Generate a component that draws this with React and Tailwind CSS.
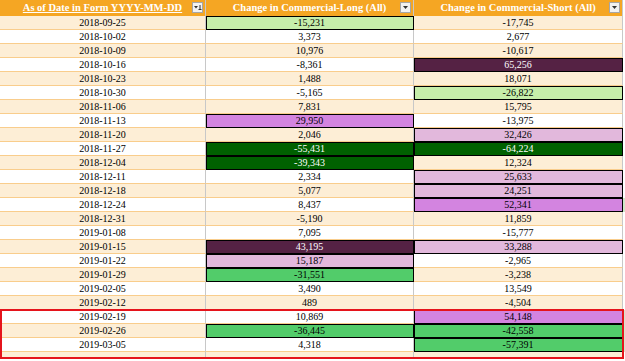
const rows = [
  ['2018-09-25', '-15,231', '-17,745', 'lg', null],
  ['2018-10-02', '3,373', '2,677', null, null],
  ['2018-10-09', '10,976', '-10,617', null, null],
  ['2018-10-16', '-8,361', '65,256', null, 'dp'],
  ['2018-10-23', '1,488', '18,071', null, null],
  ['2018-10-30', '-5,165', '-26,822', null, 'lg'],
  ['2018-11-06', '7,831', '15,795', null, null],
  ['2018-11-13', '29,950', '-13,975', 'mp', null],
  ['2018-11-20', '2,046', '32,426', null, 'lp'],
  ['2018-11-27', '-55,431', '-64,224', 'dg', 'dg'],
  ['2018-12-04', '-39,343', '12,324', 'dg', null],
  ['2018-12-11', '2,334', '25,633', null, 'lp'],
  ['2018-12-18', '5,077', '24,251', null, 'lp'],
  ['2018-12-24', '8,437', '52,341', null, 'mp'],
  ['2018-12-31', '-5,190', '11,859', null, null],
  ['2019-01-08', '7,095', '-15,777', null, null],
  ['2019-01-15', '43,195', '33,288', 'dp', 'lp'],
  ['2019-01-22', '15,187', '-2,965', 'lp', null],
  ['2019-01-29', '-31,551', '-3,238', 'mg', null],
  ['2019-02-05', '3,490', '13,549', null, null],
  ['2019-02-12', '489', '-4,504', null, null],
  ['2019-02-19', '10,869', '54,148', null, 'mp'],
  ['2019-02-26', '-36,445', '-42,558', 'mg', 'mg'],
  ['2019-03-05', '4,318', '-57,391', null, 'mg'],
];

// conditional formatting fills
const fills = {
  lg: 'bg-[#c6eeaa] text-black',
  mg: 'bg-[#52cc6a] text-black',
  dg: 'bg-[#006100] text-white',
  lp: 'bg-[#e2b8dc] text-black',
  mp: 'bg-[#d384e0] text-black',
  dp: 'bg-[#552244] text-white',
};

function FilterButton({ sorted }) {
  return (
    <div className="flex h-[11px] w-[11px] items-center justify-center border border-[#a6a6a6] bg-[#f2f2f2]">
      <svg width="9" height="7" viewBox="0 0 9 7">
        {sorted ? (
          <>
            <path d="M1 2h4L3 4.5z" fill="#333" />
            <rect x="6.5" y="1" width="1" height="5" fill="#333" />
            <rect x="5.5" y="5" width="3" height="1" fill="#333" />
          </>
        ) : (
          <path d="M2 2h5L4.5 5z" fill="#333" />
        )}
      </svg>
    </div>
  );
}

function HeaderCell({ label, underline, sorted, last }) {
  return (
    <div className={`relative flex h-[16px] items-center justify-center bg-[#f5a623] ${last ? '' : 'border-r border-[#c8c8c8]'}`}>
      <span className={`text-[10.5px] font-bold text-white ${underline ? 'underline' : ''}`}>{label}</span>
      <div className="absolute right-[2px] top-[2px]">
        <FilterButton sorted={sorted} />
      </div>
    </div>
  );
}

function Cell({ value, fill, stripe }) {
  const base = 'flex h-[14px] items-center justify-center border-r text-[10px] leading-none';
  if (fill) {
    return (
      <div className={`${base} border-b border-black shadow-[inset_1px_1px_0_#000] ${fills[fill]}`}>
        {value}
      </div>
    );
  }
  return (
    <div className={`${base} border-b border-r-[#c8c8c8] border-b-[#f9cd8c] text-black ${stripe ? 'bg-[#fdeed6]' : 'bg-white'}`}>
      {value}
    </div>
  );
}

export default function App() {
  return (
    <div className="relative h-[361px] w-[625px] overflow-hidden bg-white" style={{ fontFamily: '"Liberation Serif", "Times New Roman", serif' }}>
      <div className="grid grid-cols-[206px_208px_209px_2px]">
        <HeaderCell label="As of Date in Form YYYY-MM-DD" underline sorted />
        <HeaderCell label="Change in Commercial-Long (All)" />
        <HeaderCell label="Change in Commercial-Short (All)" />
        <div className="bg-white" />

        {rows.map(([date, long, short, fl, fs], i) => {
          const stripe = i % 2 === 0;
          return [
            <Cell key={`d${i}`} value={date} stripe={stripe} />,
            <Cell key={`l${i}`} value={long} fill={fl} stripe={stripe} />,
            <Cell key={`s${i}`} value={short} fill={fs} stripe={stripe} />,
            <div key={`e${i}`} className={`h-[14px] ${fs === 'mg' || fs === 'mp' ? 'bg-[#cfe8c8]' : 'bg-white'}`} />,
          ];
        })}

        <div className="h-[6px] border-r border-[#c8c8c8] bg-[#fdeed6]" />
        <div className="h-[6px] border-r border-[#c8c8c8] bg-[#fdeed6]" />
        <div className="h-[6px] border-r border-[#c8c8c8] bg-[#fdeed6]" />
        <div className="h-[6px] bg-white" />
      </div>

      {/* highlight box drawn over the last three weeks */}
      <div className="absolute left-0 top-[309px] h-[50px] w-[624px] border-2 border-[#e5141c]" />
    </div>
  );
}
